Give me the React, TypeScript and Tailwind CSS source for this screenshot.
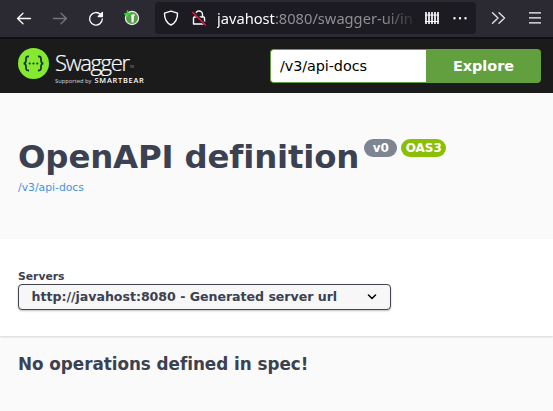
import type { ReactNode } from "react";

function Icon({ className, children }: { className: string; children: ReactNode }) {
  return (
    <svg viewBox="0 0 16 16" fill="none" stroke="currentColor" strokeWidth="1.3" strokeLinecap="round" strokeLinejoin="round" className={`h-4 w-4 shrink-0 ${className}`}>
      {children}
    </svg>
  );
}

function Toolbar() {
  return (
    <div className="flex h-[39px] items-start border-b-2 border-[#101014] bg-[#2b2a33] text-[#fbfbfe]">
      <Icon className="mt-[10px] ml-4">
        <path d="M1.5 8.5H14.5M7 3.2L1.5 8.5L7 13.8" />
      </Icon>
      <Icon className="mt-[10px] ml-5 text-[#75747b]">
        <path d="M1.5 8.5H14.5M9 3.2L14.5 8.5L9 13.8" />
      </Icon>
      <Icon className="mt-[10px] ml-5">
        <path d="M12.4 4.3A6.3 6.3 0 1 0 14.3 9" />
        <path d="M14.4 2.5V6.5H10.2Z" fill="currentColor" />
      </Icon>
      <Icon className="mt-[10px] ml-5">
        <circle cx="8" cy="8" r="6.6" fill="#5b9a4d" stroke="#e9efe8" strokeWidth="1.2" />
        <path d="M7 5.2C8 3.8 10.8 4 11 5.2C10 5.6 9.8 6.5 9.8 8.5L9.5 12.5H7.5V7Z" fill="#fff" stroke="none" />
        <path d="M3.5 1.2V6.4M.9 3.8H6.1" stroke="#20dd28" strokeWidth="1.8" />
      </Icon>
      <div className="mt-[2px] ml-[15px] flex h-8 w-[321px] shrink-0 items-start overflow-hidden rounded bg-[#1c1b22]">
        <Icon className="mt-2 ml-2">
          <path d="M8 1.2L14.5 3.2C14.6 8.5 12.6 12.8 8 15C3.4 12.8 1.4 8.5 1.5 3.2Z" strokeWidth="1.4" />
        </Icon>
        <Icon className="mt-2 ml-3">
          <path d="M4.5 7V4.5A3.5 3.5 0 0 1 11.5 4.5V7M3.5 7H12.5A1 1 0 0 1 13.5 8V14H2.5V8A1 1 0 0 1 3.5 7Z" strokeWidth="1.4" />
          <path d="M2 2L15 15" stroke="#1c1b22" strokeWidth="3" />
          <path d="M1.8 2.5L14.5 15" stroke="#ee1748" strokeWidth="1.4" />
        </Icon>
        <div className="mt-[6px] ml-[10px] w-[200px] whitespace-nowrap font-['Noto_Sans',sans-serif] text-[14.67px] leading-5 text-[#8f8e95] [mask-image:linear-gradient(to_right,black_165px,transparent_202px)]">
          <span className="text-[#fbfbfe]">javahost</span>:8080/swagger-ui/in
        </div>
        <Icon className="mt-2 ml-[7px]">
          <path d="M2 2V14M5 2V14M8 2V14M11 2V14M14 2V14" strokeWidth="1.7" strokeLinecap="butt" />
          <path d="M1 5H15M1 11.5H15" strokeWidth="1" strokeLinecap="butt" />
        </Icon>
        <Icon className="mt-2 ml-3">
          <path d="M2.5 8.3H2.51M8 8.3H8.01M13.5 8.3H13.51" strokeWidth="2.4" />
        </Icon>
      </div>
      <Icon className="mt-[10px] ml-[15px] text-[#e0e0e5]">
        <path d="M1.5 2.8L7 8L1.5 13.2M8 2.8L13.5 8L8 13.2" strokeWidth="1.4" />
      </Icon>
      <Icon className="mt-[10px] ml-5">
        <path d="M2 2.8H14M2 7.8H14M2 12.8H14" strokeWidth="1.3" strokeLinecap="butt" />
      </Icon>
    </div>
  );
}

function Logo() {
  return (
    <div className="flex items-start">
      <svg viewBox="0 0 32 32" className="h-8 w-8 shrink-0">
        <circle cx="15.5" cy="15.5" r="15.5" fill="#85ea2d" />
        <g transform="translate(-.5 -.5)" fill="none" stroke="#173647" strokeWidth="1.8">
          <path d="M11.5 9C8.7 8.7 8.4 10 8.5 12C8.6 14.2 8.3 15.6 6.2 15.9C8.3 16.2 8.6 17.6 8.5 19.8C8.4 22 8.7 23.2 11.5 23" />
          <path d="M20.5 9C23.3 8.7 23.6 10 23.5 12C23.4 14.2 23.7 15.6 25.8 15.9C23.7 16.2 23.4 17.6 23.5 19.8C23.6 22 23.3 23.2 20.5 23" />
          <path d="M12.2 16H12.21M16 16H16.01M19.8 16H19.81" strokeWidth="2.2" strokeLinecap="round" />
        </g>
      </svg>
      <div className="ml-[5px] mt-[3px] flex flex-col whitespace-nowrap text-white">
        <div className="flex h-[24px] items-start">
          <span className="font-['Open_Sans',sans-serif] text-[22px] leading-[23px] font-light tracking-[-1.35px] [-webkit-text-stroke:0.2px_white]">Swagger</span>
          <span className="mt-[14px] ml-px font-['Open_Sans',sans-serif] text-[3px] leading-[4px] text-[#999]">TM</span>
        </div>
        <div className="flex items-baseline leading-[10px]">
          <span className="font-['Open_Sans',sans-serif] text-[5.8px] text-[#ddd]">Supported by</span>
          <span className="ml-[3px] font-['Open_Sans',sans-serif] text-[7.4px] font-semibold tracking-[0.75px]">SMARTBEAR</span>
        </div>
      </div>
    </div>
  );
}

export default function App() {
  return (
    <div className="h-[411px] w-[553px] overflow-hidden bg-[#fafafa] font-['DejaVu_Sans',sans-serif] text-[#3b4151]">
      <Toolbar />
      <header className="flex h-[54px] items-start justify-between bg-[#1b1b1b] pr-3 pl-[18px]">
        <div className="mt-[9px]">
          <Logo />
        </div>
        <div className="mt-[10px] flex h-[34px] w-[271px]">
          <div className="w-[156px] rounded-l-[4px] border-y border-l border-[#62a03f] bg-white pl-[9px] text-[14.4px] leading-8 tracking-[-0.08px] text-black">/v3/api-docs</div>
          <button className="flex-1 rounded-r-[4px] bg-[#62a03f] text-[14.4px] leading-[34px] font-bold text-white">Explore</button>
        </div>
      </header>
      <section className="h-[146px] px-[18px] pt-[45px]">
        <div className="flex h-[40px] items-start whitespace-nowrap">
          <h2 className="text-[32.4px] leading-[38px] font-bold tracking-[-0.17px]">OpenAPI definition</h2>
          <span className="mt-px ml-[5px] h-[18px] w-[33px] rounded-full bg-[#7d8492] text-center text-[12px] leading-[19px] font-bold text-white">v0</span>
          <span className="mt-px ml-1 h-[18px] w-[45px] rounded-full bg-[#89bf04] text-center text-[12px] leading-[19px] font-bold text-white">OAS3</span>
        </div>
        <a className="mt-[3px] block text-[10.8px] leading-[14px] text-[#4990e2]">/v3/api-docs</a>
      </section>
      <section className="h-[97px] bg-white px-[18px] pt-[31px] shadow-[0_1px_2px_0_rgba(0,0,0,0.15)]">
        <div className="text-[10.8px] leading-[14px] font-bold">Servers</div>
        <div className="flex h-[26px] w-[373px] items-center justify-between rounded-[4px] border border-[#41444e] bg-[#f7f7f7] pr-[13px] pl-[12.5px] text-[12.6px] font-bold tracking-[-0.035px] shadow-[0_1px_2px_0_rgba(0,0,0,0.25)]">
          <span>http://javahost:8080 - Generated server url</span>
          <svg viewBox="0 0 10 6" className="h-[6px] w-[10px]" fill="none" stroke="#000" strokeWidth="1.5" strokeLinecap="round" strokeLinejoin="round">
            <path d="M1.5 1L5 4.5L8.5 1" />
          </svg>
        </div>
      </section>
      <h3 className="px-[18px] pt-[17px] text-[16.8px] leading-[22px] font-bold tracking-[-0.03px]">No operations defined in spec!</h3>
    </div>
  );
}
